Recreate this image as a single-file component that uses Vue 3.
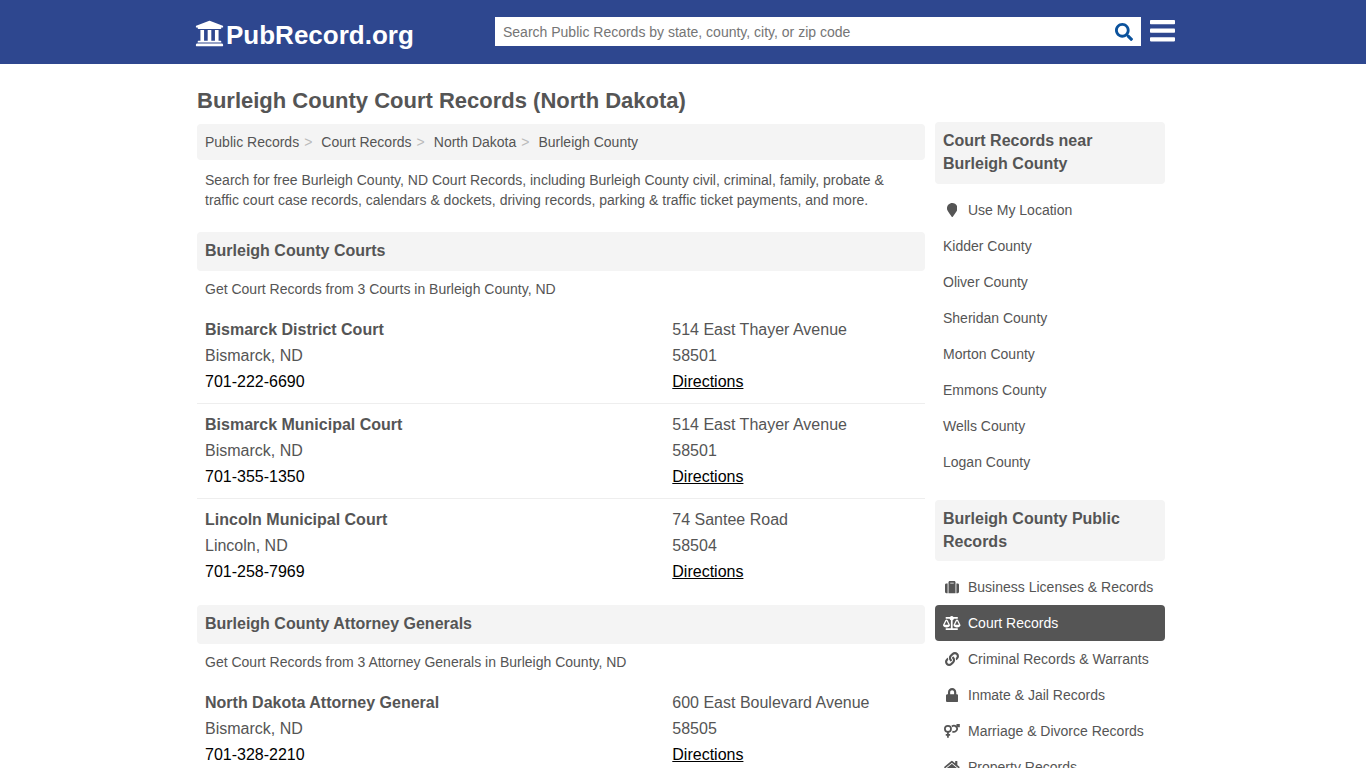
<script setup>
const crumbs = ['Public Records', 'Court Records', 'North Dakota', 'Burleigh County']

const sections = [
  {
    title: 'Burleigh County Courts',
    intro: 'Get Court Records from 3 Courts in Burleigh County, ND',
    rows: [
      { name: 'Bismarck District Court', city: 'Bismarck, ND', phone: '701-222-6690', street: '514 East Thayer Avenue', zip: '58501' },
      { name: 'Bismarck Municipal Court', city: 'Bismarck, ND', phone: '701-355-1350', street: '514 East Thayer Avenue', zip: '58501' },
      { name: 'Lincoln Municipal Court', city: 'Lincoln, ND', phone: '701-258-7969', street: '74 Santee Road', zip: '58504' },
    ],
  },
  {
    title: 'Burleigh County Attorney Generals',
    intro: 'Get Court Records from 3 Attorney Generals in Burleigh County, ND',
    rows: [
      { name: 'North Dakota Attorney General', city: 'Bismarck, ND', phone: '701-328-2210', street: '600 East Boulevard Avenue', zip: '58505' },
    ],
  },
]

const nearby = ['Kidder County', 'Oliver County', 'Sheridan County', 'Morton County', 'Emmons County', 'Wells County', 'Logan County']

const records = [
  {
    label: 'Business Licenses & Records', w: 512,
    d: 'M128 480h256V80c0-26.5-21.5-48-48-48H176c-26.5 0-48 21.5-48 48v400zm64-384h128v32H192V96zm320 80v256c0 26.5-21.5 48-48 48h-48V128h48c26.5 0 48 21.5 48 48zM96 480H48c-26.5 0-48-21.5-48-48V176c0-26.5 21.5-48 48-48h48v352z',
  },
  {
    label: 'Court Records', w: 640, active: true,
    d: 'M256 336h-.02c0-16.18 1.34-8.73-85.05-181.51-17.65-35.29-68.19-35.36-85.87 0C-2.06 328.75.02 320.33.02 336H0c0 44.18 57.31 80 128 80s128-35.82 128-80zM128 176l72 144H56l72-144zm511.98 160c0-16.18 1.34-8.73-85.05-181.51-17.65-35.29-68.19-35.36-85.87 0-87.12 174.26-85.04 165.84-85.04 181.51H384c0 44.18 57.31 80 128 80s128-35.82 128-80h-.02zM440 320l72-144 72 144H440zm88 128H352V153.25c23.51-10.29 41.16-31.48 46.39-57.25H528c8.84 0 16-7.16 16-16V48c0-8.84-7.16-16-16-16H383.64C369.04 12.68 346.09 0 320 0s-49.04 12.68-63.64 32H112c-8.84 0-16 7.16-16 16v32c0 8.84 7.16 16 16 16h129.61c5.23 25.76 22.87 46.96 46.39 57.25V448H112c-8.84 0-16 7.16-16 16v32c0 8.84 7.16 16 16 16h416c8.84 0 16-7.16 16-16v-32c0-8.84-7.16-16-16-16z',
  },
  {
    label: 'Criminal Records & Warrants', w: 512,
    d: 'M326.612 185.391c59.747 59.809 58.927 155.698.36 214.59-.11.12-.24.25-.36.37l-67.2 67.2c-59.27 59.27-155.699 59.262-214.96 0-59.27-59.26-59.27-155.7 0-214.96l37.106-37.106c9.84-9.84 26.786-3.3 27.294 10.606.648 17.722 3.826 35.527 9.69 52.721 1.986 5.822.567 12.262-3.783 16.612l-13.087 13.087c-28.026 28.026-28.905 73.66-1.155 101.96 28.024 28.579 74.086 28.749 102.325.51l67.2-67.19c28.191-28.191 28.073-73.757 0-101.83-3.701-3.694-7.429-6.564-10.341-8.569a16.037 16.037 0 0 1-6.947-12.606c-.396-10.567 3.348-21.456 11.698-29.806l21.054-21.055c5.521-5.521 14.182-6.199 20.584-1.731a152.482 152.482 0 0 1 20.522 17.197zM467.547 44.449c-59.261-59.262-155.69-59.27-214.96 0l-67.2 67.2c-.12.12-.25.25-.36.37-58.566 58.892-59.387 154.781.36 214.59a152.454 152.454 0 0 0 20.521 17.196c6.402 4.468 15.064 3.789 20.584-1.731l21.054-21.055c8.35-8.35 12.094-19.239 11.698-29.806a16.037 16.037 0 0 0-6.947-12.606c-2.912-2.005-6.64-4.875-10.341-8.569-28.073-28.073-28.191-73.639 0-101.83l67.2-67.19c28.239-28.239 74.3-28.069 102.325.51 27.75 28.3 26.872 73.934-1.155 101.96l-13.087 13.087c-4.35 4.35-5.769 10.79-3.783 16.612 5.864 17.194 9.042 34.999 9.69 52.721.509 13.906 17.454 20.446 27.294 10.606l37.106-37.106c59.271-59.259 59.271-155.699.001-214.959z',
  },
  {
    label: 'Inmate & Jail Records', w: 448,
    d: 'M400 224h-24v-72C376 68.2 307.8 0 224 0S72 68.2 72 152v72H48c-26.5 0-48 21.5-48 48v192c0 26.5 21.5 48 48 48h352c26.5 0 48-21.5 48-48V272c0-26.5-21.5-48-48-48zm-104 0H152v-72c0-39.7 32.3-72 72-72s72 32.3 72 72v72z',
  },
  { label: 'Marriage & Divorce Records', w: 576, couple: true },
  {
    label: 'Property Records', w: 576,
    d: 'M280.37 148.26L96 300.11V464a16 16 0 0 0 16 16l112.06-.29a16 16 0 0 0 15.92-16V368a16 16 0 0 1 16-16h64a16 16 0 0 1 16 16v95.64a16 16 0 0 0 16 16.05L464 480a16 16 0 0 0 16-16V300L295.67 148.26a12.19 12.19 0 0 0-15.3 0zM571.6 251.47L488 182.56V44.05a12 12 0 0 0-12-12h-56a12 12 0 0 0-12 12v72.61L318.47 43a48 48 0 0 0-61 0L4.34 251.47a12 12 0 0 0-1.6 16.9l25.5 31A12 12 0 0 0 45.15 301l235.22-193.74a12.19 12.19 0 0 1 15.3 0L530.9 301a12 12 0 0 0 16.9-1.6l25.5-31a12 12 0 0 0-1.7-16.93z',
  },
]
</script>

<template>
  <div class="page">
    <header class="topbar">
      <div class="bar-inner">
        <a class="logo">
          <svg class="logo-icon" viewBox="0 0 512 512"><path fill="currentColor" d="M496 128v16a8 8 0 0 1-8 8h-24v12c0 6.627-5.373 12-12 12H60c-6.627 0-12-5.373-12-12v-12H24a8 8 0 0 1-8-8v-16a8 8 0 0 1 4.941-7.392l232-88a7.996 7.996 0 0 1 6.118 0l232 88A8 8 0 0 1 496 128zm-24 304H40c-13.255 0-24 10.745-24 24v16a8 8 0 0 0 8 8h464a8 8 0 0 0 8-8v-16c0-13.255-10.745-24-24-24zM96 192v192H60c-6.627 0-12 5.373-12 12v20h416v-20c0-6.627-5.373-12-12-12h-36V192h-64v192h-64V192h-64v192h-64V192H96z" /></svg>
          <span>PubRecord.org</span>
        </a>
        <div class="search">
          <input type="text" placeholder="Search Public Records by state, county, city, or zip code" />
          <svg class="search-icon" viewBox="0 0 512 512"><path fill="currentColor" d="M505 442.7L405.3 343c-4.5-4.5-10.6-7-17-7H372c27.6-35.3 44-79.7 44-128C416 93.1 322.9 0 208 0S0 93.1 0 208s93.1 208 208 208c48.3 0 92.7-16.4 128-44v16.3c0 6.4 2.5 12.5 7 17l99.7 99.7c9.4 9.4 24.6 9.4 33.9 0l28.3-28.3c9.4-9.4 9.4-24.6.1-34zM208 336c-70.7 0-128-57.2-128-128 0-70.7 57.2-128 128-128 70.7 0 128 57.2 128 128 0 70.7-57.2 128-128 128z" /></svg>
        </div>
        <svg class="menu" viewBox="0 0 25 22">
          <g fill="currentColor">
            <rect y="0" width="25" height="4.2" rx="0.8" />
            <rect y="8.6" width="25" height="4.2" rx="0.8" />
            <rect y="17.2" width="25" height="4.2" rx="0.8" />
          </g>
        </svg>
      </div>
    </header>

    <div class="columns">
      <main class="main">
        <h1>Burleigh County Court Records (North Dakota)</h1>
        <nav class="crumbs">
          <span v-for="c in crumbs" :key="c" class="crumb">{{ c }}</span>
        </nav>
        <p class="lead">Search for free Burleigh County, ND Court Records, including Burleigh County civil, criminal, family, probate &amp; traffic court case records, calendars &amp; dockets, driving records, parking &amp; traffic ticket payments, and more.</p>

        <section v-for="s in sections" :key="s.title" class="section">
          <h2>{{ s.title }}</h2>
          <p class="intro">{{ s.intro }}</p>
          <div v-for="r in s.rows" :key="r.name" class="row">
            <div class="who">
              <strong>{{ r.name }}</strong>
              <span>{{ r.city }}</span>
              <a>{{ r.phone }}</a>
            </div>
            <div class="where">
              <span>{{ r.street }}</span>
              <span>{{ r.zip }}</span>
              <a class="directions">Directions</a>
            </div>
          </div>
        </section>
      </main>

      <aside class="side">
        <h2>Court Records near Burleigh County</h2>
        <ul>
          <li>
            <span class="icon"><svg viewBox="0 0 384 512"><path fill="currentColor" d="M172.268 501.67C26.97 291.031 0 269.413 0 192 0 85.961 85.961 0 192 0s192 85.961 192 192c0 77.413-26.97 99.031-172.268 309.67-9.535 13.774-29.93 13.773-39.464 0z" /></svg></span>
            <span>Use My Location</span>
          </li>
          <li v-for="n in nearby" :key="n">{{ n }}</li>
        </ul>
        <h2>Burleigh County Public Records</h2>
        <ul>
          <li v-for="r in records" :key="r.label" :class="{ active: r.active }">
            <span class="icon">
              <svg :viewBox="`0 0 ${r.w} 512`">
                <g v-if="r.couple" fill="none" stroke="currentColor" stroke-width="64">
                  <circle cx="144" cy="176" r="112" />
                  <path d="M144 288V500M64 400H224" />
                  <path d="M288 92A112 112 0 1 1 306 270M440 106L530 46" />
                  <path d="M456 30H546V122" />
                </g>
                <path v-else fill="currentColor" :d="r.d" />
              </svg>
            </span>
            <span>{{ r.label }}</span>
          </li>
        </ul>
      </aside>
    </div>
  </div>
</template>

<style>
html,
body {
  overflow: hidden;
}
</style>

<style scoped>
.page {
  height: 768px;
  overflow: hidden;
  background: #fff;
  color: #555;
  font-family: "Liberation Sans", Arial, sans-serif;
  font-size: 14px;
}
.topbar {
  height: 64px;
  background: #2e478f;
}
.bar-inner {
  display: flex;
  align-items: flex-start;
  width: 980px;
  margin: 0 auto;
  padding-left: 2px;
  box-sizing: border-box;
}
.logo {
  display: flex;
  flex: none;
  align-items: center;
  width: 300px;
  height: 30px;
  margin-top: 20px;
  color: #fff;
  font-size: 26px;
  font-weight: bold;
}
.logo-icon {
  width: 29px;
  height: 29px;
  margin: -3px 2px 0 0;
}
.search {
  display: flex;
  flex: none;
  align-items: center;
  width: 646px;
  height: 29px;
  margin-top: 17px;
  padding: 0 8px;
  box-sizing: border-box;
  background: #fff;
}
.search input {
  flex: 1;
  padding: 0;
  border: 0;
  outline: 0;
  background: none;
  font: 14px "Liberation Sans", Arial, sans-serif;
}
.search input::placeholder {
  color: #757575;
}
.search-icon {
  width: 18px;
  height: 18px;
  color: #0b529c;
}
.menu {
  flex: none;
  width: 25px;
  height: 22px;
  margin: 20px 0 0 9px;
  color: #fff;
}
.columns {
  display: flex;
  gap: 10px;
  width: 968px;
  margin-left: 197px;
}
.main {
  width: 728px;
}
h1,
h2,
p,
ul {
  margin: 0;
  padding: 0;
}
h1 {
  padding-top: 24px;
  font-size: 22px;
  line-height: 26px;
}
.crumbs {
  display: flex;
  height: 36px;
  margin-top: 10px;
  padding: 0 8px;
  border-radius: 4px;
  background: #f4f4f4;
  line-height: 36px;
}
.crumb:not(:last-child)::after {
  content: ">";
  margin: 0 9px 0 5px;
  color: #bbb;
}
.lead {
  padding: 10px 8px 0;
  line-height: 20px;
}
.section {
  margin-top: 22px;
}
.section + .section {
  margin-top: 11px;
}
h2 {
  padding: 8px;
  border-radius: 4px;
  background: #f4f4f4;
  font-size: 16px;
  line-height: 23px;
}
.section h2 {
  padding: 7px 8px 9px;
}
.intro {
  padding: 8px 8px 10px;
  line-height: 20px;
}
.row {
  display: flex;
  padding: 8px;
  border-bottom: 1px solid #eee;
  font-size: 16px;
  line-height: 26px;
}
.row:last-child {
  border-color: transparent;
}
.who,
.where {
  display: flex;
  flex-direction: column;
}
.who {
  width: 467.3px;
}
.row a {
  color: #000;
}
.directions {
  text-decoration: underline;
}
.side {
  width: 230px;
  padding-top: 58px;
}
.side h2 {
  padding: 7px 8px 8px;
}
.side h2:first-child {
  padding-bottom: 9px;
}
ul {
  margin: 8px 0 20px;
  list-style: none;
}
li {
  display: flex;
  align-items: center;
  height: 36px;
  padding: 0 8px;
  border-radius: 4px;
}
li.active {
  background: #555;
  color: #fff;
}
.icon {
  display: flex;
  justify-content: center;
  width: 18px;
  margin-right: 7px;
}
.icon svg {
  height: 14px;
}
</style>
